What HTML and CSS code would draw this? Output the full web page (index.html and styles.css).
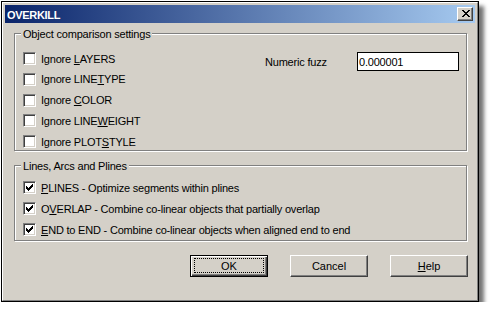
FILE: index.html
```html
<!DOCTYPE html>
<html><head>
<meta charset="utf-8">
<title>OVERKILL</title>
<link rel="stylesheet" href="styles.css">
</head><body>
<div class="win">
 <div class="frame">
  <div class="caption">
   <span class="caption-text">OVERKILL</span>
   <span class="closebtn"><svg width="14" height="12" viewBox="0 0 14 12"><path d="M4 2h2v1H4zM10 2h2v1h-2zM5 3h2v1H5zM9 3h2v1H9zM6 4h4v1H6zM7 5h2v1H7zM6 6h4v1H6zM5 7h2v1H5zM9 7h2v1H9zM4 8h2v1H4zM10 8h2v1h-2z" fill="#000"/></svg></span>
  </div>
  <div class="client">
   <div class="group g1">
    <span class="legend">Object comparison settings</span>
    <div class="g1-body">
     <div class="checks checks-1">
      <div class="row"><span class="cb"></span><span class="lbl">Ignore <u>L</u>AYERS</span></div>
      <div class="row"><span class="cb"></span><span class="lbl">Ignore LINE<u>T</u>YPE</span></div>
      <div class="row"><span class="cb"></span><span class="lbl">Ignore <u>C</u>OLOR</span></div>
      <div class="row"><span class="cb"></span><span class="lbl">Ignore LINE<u>W</u>EIGHT</span></div>
      <div class="row"><span class="cb"></span><span class="lbl">Ignore PLOT<u>S</u>TYLE</span></div>
     </div>
     <div class="fuzz">
      <span class="fuzz-label">Numeric fuzz</span>
      <span class="edit">0.000001</span>
     </div>
    </div>
   </div>
   <div class="group g2">
    <span class="legend">Lines, Arcs and Plines</span>
    <div class="checks checks-2">
     <div class="row"><span class="cb"><svg width="11" height="11" viewBox="0 0 11 11"><path d="M2 4h1v3H2zM3 5h1v3H3zM4 6h1v3H4zM5 5h1v3H5zM6 4h1v3H6zM7 3h1v3H7zM8 2h1v3H8z" fill="#000"/></svg></span><span class="lbl"><u>P</u>LINES - Optimize segments within plines</span></div>
     <div class="row"><span class="cb"><svg width="11" height="11" viewBox="0 0 11 11"><path d="M2 4h1v3H2zM3 5h1v3H3zM4 6h1v3H4zM5 5h1v3H5zM6 4h1v3H6zM7 3h1v3H7zM8 2h1v3H8z" fill="#000"/></svg></span><span class="lbl">O<u>V</u>ERLAP - Combine co-linear objects that partially overlap</span></div>
     <div class="row"><span class="cb"><svg width="11" height="11" viewBox="0 0 11 11"><path d="M2 4h1v3H2zM3 5h1v3H3zM4 6h1v3H4zM5 5h1v3H5zM6 4h1v3H6zM7 3h1v3H7zM8 2h1v3H8z" fill="#000"/></svg></span><span class="lbl"><u>E</u>ND to END - Combine co-linear objects when aligned end to end</span></div>
    </div>
   </div>
   <div class="buttons">
    <button class="btn btn-default"><span class="focus">OK</span></button>
    <button class="btn">Cancel</button>
    <button class="btn"><span class="lbl"><u>H</u>elp</span></button>
   </div>
  </div>
 </div>
</div>
</body></html>
```

FILE: styles.css
```css
body { margin: 0; background: #fff; font-family: "Liberation Sans", Arial, sans-serif;
       font-size: 11px; letter-spacing: -0.2px; color: #000; }

.win { margin: 1px 0 0 1px; width: 478px; height: 301px; box-sizing: border-box;
       border: 1px solid #000; background: #d4d0c8;
       box-shadow: 5px 5px 4px rgba(0, 0, 0, 0.55); }
.frame { height: 100%; box-sizing: border-box; padding: 2px;
         border: 1px solid; border-color: #fff #808080 #808080 #fff;
         display: flex; flex-direction: column; }

.caption { height: 18px; flex: none; display: flex; align-items: center;
           justify-content: space-between; padding: 0 2px 0 2px;
           background: linear-gradient(to right, #0a246a, #a6caf0); }
.caption-text { color: #fff; font-weight: bold; letter-spacing: -0.3px; padding-top: 1px; }
.closebtn { width: 16px; height: 14px; box-sizing: border-box; display: block;
            background: #d4d0c8; border: 1px solid; border-color: #fff #404040 #404040 #fff;
            box-shadow: inset -1px -1px 0 #808080; }
.closebtn svg { display: block; }

.client { flex: 1; padding: 0 8px 0 9px; display: flex; flex-direction: column; }

.group { box-sizing: border-box; border: 1px solid #808080;
         box-shadow: inset 1px 1px 0 #fff, 1px 1px 0 #fff;
         display: flex; flex-direction: column; }
.g1 { margin-top: 10px; height: 118px; }
.g2 { margin-top: 14px; height: 76px; }
.legend { align-self: flex-start; margin: -6px 0 0 6px; padding: 0 2px;
          line-height: 13px; background: #d4d0c8; }

.g1-body { display: flex; align-items: flex-start; margin-top: 11px; }
.checks { display: flex; flex-direction: column; margin-left: 8px; }
.checks-1 { gap: 7.75px; }
.checks-2 { gap: 8px; margin-top: 8px; }
.row { height: 13px; display: flex; align-items: center; gap: 5px; white-space: nowrap; }
.lbl { white-space: nowrap; }
.cb { width: 13px; height: 13px; box-sizing: border-box; flex: none; background: #fff;
      border: 1px solid; border-color: #808080 #fff #fff #808080;
      box-shadow: inset 1px 1px 0 #404040, inset -1px -1px 0 #d4d0c8; }
.cb svg { display: block; }

.fuzz { margin-left: auto; margin-right: 7px; display: flex; align-items: center; }
.fuzz-label { width: 92px; }
.edit { width: 102px; height: 19px; box-sizing: border-box; background: #fff;
        border: 1px solid #000; padding-left: 1px; display: flex; align-items: center; }

.buttons { display: flex; justify-content: flex-end; gap: 22px; margin: 14px -1px 0 0; }
.btn { appearance: none; width: 78px; height: 22px; box-sizing: border-box; margin: 0; padding: 0;
       font: inherit; color: #000; background: #d4d0c8;
       border: 1px solid; border-color: #fff #404040 #404040 #fff;
       box-shadow: inset -1px -1px 0 #808080;
       display: flex; align-items: center; justify-content: center; }
.btn-default { border: 1px solid #000;
               box-shadow: inset 1px 1px 0 #fff, inset -1px -1px 0 #404040, inset -2px -2px 0 #808080;
               padding: 2px 3px 3px 3px; }
.focus { flex: 1; align-self: stretch; border: 1px dotted #000;
         display: flex; align-items: center; justify-content: center; }
```
